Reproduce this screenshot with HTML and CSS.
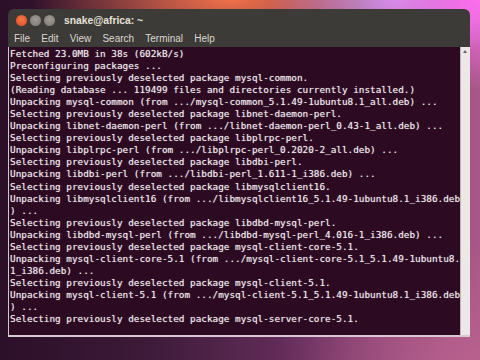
FILE: index.html
```html
<!DOCTYPE html>
<html>
<head>
<meta charset="utf-8">
<link rel="stylesheet" href="styles.css">
</head>
<body>
<div class="window">
  <div class="titlebar">
    <div class="buttons">
      <span class="btn close"></span>
      <span class="btn min"></span>
      <span class="btn max"></span>
    </div>
    <span class="title">snake@africa: ~</span>
  </div>
  <div class="menubar">
    <span>File</span><span>Edit</span><span>View</span><span>Search</span><span>Terminal</span><span>Help</span>
  </div>
  <div class="body">
<pre class="term">Fetched 23.0MB in 38s (602kB/s)
Preconfiguring packages ...
Selecting previously deselected package mysql-common.
(Reading database ... 119499 files and directories currently installed.)
Unpacking mysql-common (from .../mysql-common_5.1.49-1ubuntu8.1_all.deb) ...
Selecting previously deselected package libnet-daemon-perl.
Unpacking libnet-daemon-perl (from .../libnet-daemon-perl_0.43-1_all.deb) ...
Selecting previously deselected package libplrpc-perl.
Unpacking libplrpc-perl (from .../libplrpc-perl_0.2020-2_all.deb) ...
Selecting previously deselected package libdbi-perl.
Unpacking libdbi-perl (from .../libdbi-perl_1.611-1_i386.deb) ...
Selecting previously deselected package libmysqlclient16.
Unpacking libmysqlclient16 (from .../libmysqlclient16_5.1.49-1ubuntu8.1_i386.deb
) ...
Selecting previously deselected package libdbd-mysql-perl.
Unpacking libdbd-mysql-perl (from .../libdbd-mysql-perl_4.016-1_i386.deb) ...
Selecting previously deselected package mysql-client-core-5.1.
Unpacking mysql-client-core-5.1 (from .../mysql-client-core-5.1_5.1.49-1ubuntu8.
1_i386.deb) ...
Selecting previously deselected package mysql-client-5.1.
Unpacking mysql-client-5.1 (from .../mysql-client-5.1_5.1.49-1ubuntu8.1_i386.deb
) ...
Selecting previously deselected package mysql-server-core-5.1.</pre>
    <div class="scrollbar"><span class="arrow"></span></div>
  </div>
</div>
</body>
</html>
```
FILE: styles.css
```css
html, body {
  margin: 0;
  padding: 0;
  width: 480px;
  height: 360px;
  overflow: hidden;
}
body {
  background:
    radial-gradient(ellipse 120px 90px at 100% 0%, #ff6ef0 0%, rgba(240,120,230,0) 100%),
    radial-gradient(ellipse 130px 60px at 83% 0%, #c896e8 0%, rgba(200,150,232,0) 100%),
    radial-gradient(ellipse 200px 60px at 48% 0%, #f07048 0%, rgba(240,112,72,0) 100%),
    radial-gradient(ellipse 200px 120px at 100% 100%, #b8608e 0%, rgba(184,96,142,0) 100%),
    linear-gradient(to right, #2c0f28 0%, #3c1a38 30%, #6a3060 65%, #a85888 100%);
  font-family: "Liberation Sans", Arial, sans-serif;
}
.window {
  margin: 9px 0 0 8px;
  width: 462px;
  display: flex;
  flex-direction: column;
}
.titlebar {
  height: 21px;
  background: #3d3b37;
  border-radius: 6px 6px 0 0;
  display: flex;
  align-items: center;
  padding-left: 8px;
  padding-top: 2px;
  box-sizing: border-box;
}
.buttons {
  display: flex;
  gap: 3px;
}
.btn {
  width: 11px;
  height: 11px;
  border-radius: 50%;
  display: block;
}
.close {
  background: radial-gradient(circle at 50% 40%, #f77a48 0%, #e4562c 70%, #b8431f 100%);
}
.min, .max {
  background: radial-gradient(circle at 50% 40%, #a09c95 0%, #86827b 70%, #6a6660 100%);
}
.title {
  margin-left: 9px;
  color: #e6e2da;
  font-weight: bold;
  font-size: 10.3px;
}
.menubar {
  height: 17px;
  background: #3d3b37;
  display: flex;
  align-items: center;
  gap: 11.2px;
  padding-left: 6px;
  color: #dcd8d0;
  font-size: 10px;
}
.body {
  display: flex;
  height: 288px;
  border-left: 1px solid #d4c8cc;
  border-bottom: 2px solid #d8c8d2;
  background: #2c0a21;
}
.term {
  flex: 1;
  margin: 0;
  padding: 1px 0 0 1px;
  font-family: "DejaVu Sans Mono", monospace;
  font-size: 9.35px;
  line-height: 12.05px;
  color: #f0ebef;
  text-shadow: 0 0 1px rgba(255, 245, 250, 0.55);
  white-space: pre;
  overflow: hidden;
}
.scrollbar {
  width: 9px;
  background: #ece8e6;
  border-left: 1px solid #bdb5b5;
  position: relative;
}
.arrow {
  position: absolute;
  left: 2px;
  top: 3px;
  width: 0;
  height: 0;
  border-left: 2.5px solid transparent;
  border-right: 2.5px solid transparent;
  border-bottom: 3px solid #6a6662;
}
```
